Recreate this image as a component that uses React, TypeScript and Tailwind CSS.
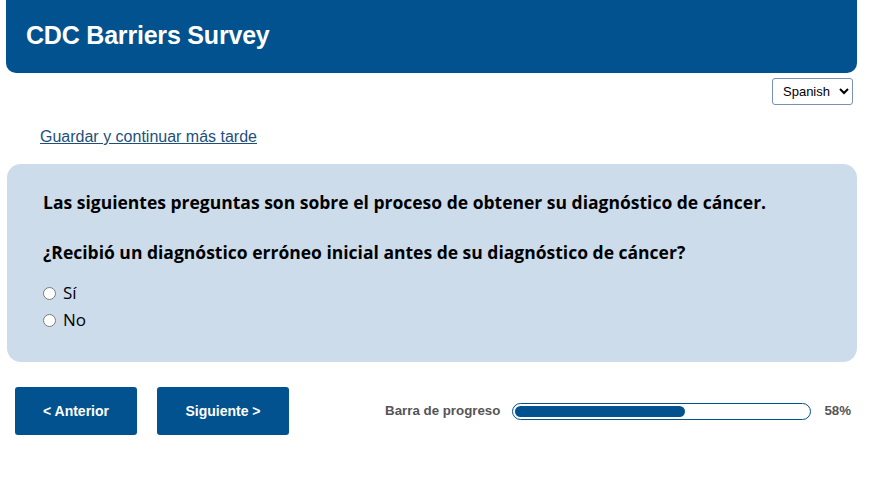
import React from "react";

export default function App() {
  return (
    <div className="min-h-[477px] w-[869px] bg-white font-['Liberation_Sans',Arial,sans-serif]">
      {/* Header */}
      <header className="ml-[6px] mr-[12px] h-[73px] rounded-b-[10px] bg-[#02528f] px-5 flex items-center">
        <h1 className="text-[25px] font-bold text-white tracking-[-0.2px] mt-[-2px]">CDC Barriers Survey</h1>
      </header>

      {/* Language */}
      <div className="flex justify-end pr-[16px] pt-[5px]">
        <select className="h-[27px] w-[81px] rounded-[3px] border border-[#7a8fb5] bg-white pl-[6px] text-[13px] text-black">
          <option>Spanish</option>
          <option>English</option>
        </select>
      </div>

      <div className="pl-[40px] pt-[20px]">
        <a href="#" className="text-[16px] text-[#1d4f7d] underline">
          Guardar y continuar más tarde
        </a>
      </div>

      {/* Question panel */}
      <section className="ml-[7px] mr-[12px] mt-[15px] h-[198px] rounded-[14px] bg-[#cddcea] px-[36px] pt-[26px] font-['Open_Sans','Noto_Sans',sans-serif] text-black">
        <p className="text-[17.5px] font-bold leading-[24px]">
          Las siguientes preguntas son sobre el proceso de obtener su diagnóstico de cáncer.
        </p>
        <p className="mt-[26px] text-[17.5px] font-bold leading-[24px]">
          ¿Recibió un diagnóstico erróneo inicial antes de su diagnóstico de cáncer?
        </p>
        <div className="mt-[17px] flex flex-col gap-[3px] text-[17px]">
          <label className="flex items-center gap-[7px] leading-[24px]">
            <input type="radio" name="q" className="m-0 h-[13px] w-[13px]" />
            Sí
          </label>
          <label className="flex items-center gap-[7px] leading-[24px]">
            <input type="radio" name="q" className="m-0 h-[13px] w-[13px]" />
            No
          </label>
        </div>
      </section>

      {/* Navigation */}
      <div className="mt-[25px] flex items-center pl-[15px] pr-[18px]">
        <button className="h-[48px] w-[122px] rounded-[3px] bg-[#02528f] text-[14px] font-bold text-white">
          &lt; Anterior
        </button>
        <button className="ml-[20px] h-[48px] w-[132px] rounded-[3px] bg-[#02528f] text-[14px] font-bold text-white">
          Siguiente &gt;
        </button>
        <div className="ml-auto flex items-center gap-[12px] text-[13.3px] font-bold text-[#555]">
          <span>Barra de progreso</span>
          <div className="h-[17px] w-[299px] rounded-full border border-[#02528f] p-[2px]">
            <div className="h-full rounded-full bg-[#02528f]" style={{ width: "58%" }} />
          </div>
          <span className="ml-[1px]">58%</span>
        </div>
      </div>
    </div>
  );
}
